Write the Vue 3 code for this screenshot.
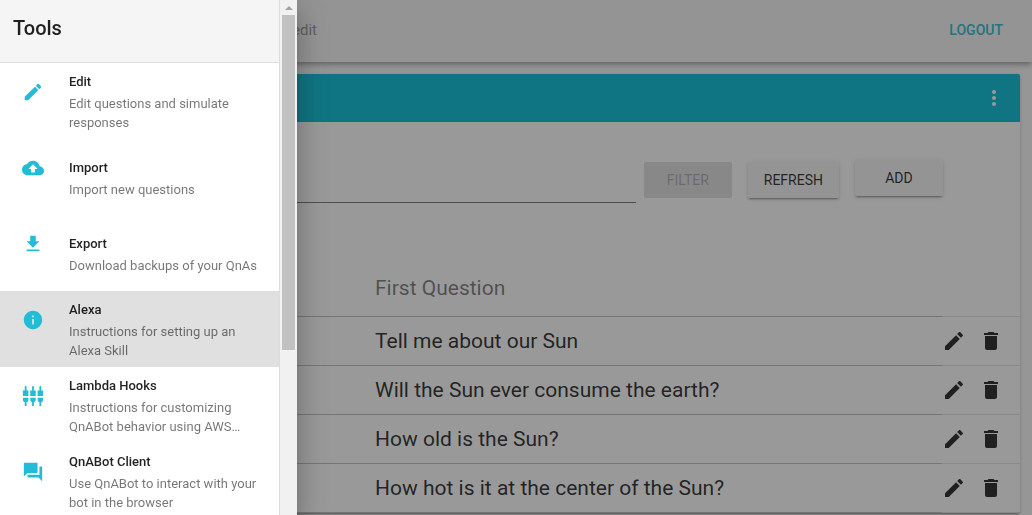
<script setup>
const icons = {
  pencil: 'M3 17.25V21h3.75L17.81 9.94l-3.75-3.75L3 17.25zM20.71 7.04c.39-.39.39-1.02 0-1.41l-2.34-2.34c-.39-.39-1.02-.39-1.41 0l-1.83 1.83 3.75 3.75 1.83-1.83z',
  cloud: 'M19.35 10.04C18.67 6.59 15.64 4 12 4 9.11 4 6.6 5.64 5.35 8.04 2.34 8.36 0 10.91 0 14c0 3.31 2.69 6 6 6h13c2.76 0 5-2.24 5-5 0-2.64-2.05-4.78-4.65-4.96zM14 13v4h-4v-4H7l5-5 5 5h-3z',
  download: 'M19 9h-4V3H9v6H5l7 7 7-7zM5 18v2h14v-2H5z',
  info: 'M12 2C6.48 2 2 6.48 2 12s4.48 10 10 10 10-4.48 10-10S17.52 2 12 2zm1 15h-2v-6h2v6zm0-8h-2V7h2v2z',
  hooks: 'M5 2c0-.55-.45-1-1-1s-1 .45-1 1v4H1v6h6V6H5V2zm4 14c0 1.3.84 2.4 2 2.82V23h2v-4.18c1.16-.41 2-1.51 2-2.82v-2H9v2zm-8 0c0 1.3.84 2.4 2 2.82V23h2v-4.18C6.16 18.4 7 17.3 7 16v-2H1v2zM21 6V2c0-.55-.45-1-1-1s-1 .45-1 1v4h-2v6h6V6h-2zm-8-4c0-.55-.45-1-1-1s-1 .45-1 1v4H9v6h6V6h-2V2zm4 14c0 1.3.84 2.4 2 2.82V23h2v-4.18c1.16-.41 2-1.51 2-2.82v-2h-6v2z',
  chat: 'M21 6h-2v9H6v2c0 .55.45 1 1 1h11l4 4V7c0-.55-.45-1-1-1zm-4 6V3c0-.55-.45-1-1-1H3c-.55 0-1 .45-1 1v14l4-4h10c.55 0 1-.45 1-1z',
  trash: 'M6 19c0 1.1.9 2 2 2h8c1.1 0 2-.9 2-2V7H6v12zM19 4h-3.5l-1-1h-5l-1 1H5v2h14V4z',
  more: 'M12 8c1.1 0 2-.9 2-2s-.9-2-2-2-2 .9-2 2 .9 2 2 2zm0 2c-1.1 0-2 .9-2 2s.9 2 2 2 2-.9 2-2-.9-2-2-2zm0 6c-1.1 0-2 .9-2 2s.9 2 2 2 2-.9 2-2-.9-2-2-2z'
}

const tools = [
  { title: 'Edit', text: 'Edit questions and simulate responses', icon: 'pencil' },
  { title: 'Import', text: 'Import new questions', icon: 'cloud' },
  { title: 'Export', text: 'Download backups of your QnAs', icon: 'download' },
  { title: 'Alexa', text: 'Instructions for setting up an Alexa Skill', icon: 'info', active: true },
  { title: 'Lambda Hooks', text: 'Instructions for customizing QnABot behavior using AWS…', icon: 'hooks' },
  { title: 'QnABot Client', text: 'Use QnABot to interact with your bot in the browser', icon: 'chat' }
]

const questions = [
  'Tell me about our Sun',
  'Will the Sun ever consume the earth?',
  'How old is the Sun?',
  'How hot is it at the center of the Sun?'
]
</script>

<template>
  <div class="app">
    <header class="toolbar">
      <span class="crumb">edit</span>
      <button class="logout" type="button">LOGOUT</button>
    </header>

    <main class="content">
      <section class="card">
        <div class="card-bar">
          <button class="icon-btn" type="button" aria-label="More">
            <svg class="icon" viewBox="0 0 24 24"><path :d="icons.more" /></svg>
          </button>
        </div>
        <form class="filters" @submit.prevent>
          <input class="filter-input" type="text" aria-label="Filter" />
          <button class="btn" type="button" disabled>FILTER</button>
          <button class="btn" type="button">REFRESH</button>
          <button class="btn add" type="button">ADD</button>
        </form>
        <table class="questions">
          <thead>
            <tr>
              <td class="lead"></td>
              <th scope="col">First Question</th>
              <td class="actions"></td>
            </tr>
          </thead>
          <tbody>
            <tr v-for="q in questions" :key="q">
              <td class="lead"></td>
              <td>{{ q }}</td>
              <td class="actions">
                <div class="action-list">
                  <button class="icon-btn" type="button" aria-label="Edit">
                    <svg class="icon" viewBox="0 0 24 24"><path :d="icons.pencil" /></svg>
                  </button>
                  <button class="icon-btn" type="button" aria-label="Delete">
                    <svg class="icon" viewBox="0 0 24 24"><path :d="icons.trash" /></svg>
                  </button>
                </div>
              </td>
            </tr>
          </tbody>
        </table>
      </section>
    </main>

    <div class="scrim"></div>

    <aside class="drawer">
      <div class="drawer-body">
        <h1 class="drawer-title">Tools</h1>
        <nav>
          <a v-for="t in tools" :key="t.title" href="#" class="tool" :class="{ active: t.active }">
            <svg class="icon tool-icon" viewBox="0 0 24 24"><path :d="icons[t.icon]" /></svg>
            <span class="tool-text">
              <span class="tool-title">{{ t.title }}</span>
              <span class="tool-sub">{{ t.text }}</span>
            </span>
          </a>
        </nav>
      </div>
      <div class="scrollbar">
        <svg class="arrow" viewBox="0 0 8 4"><path d="M0 4L4 0l4 4z" /></svg>
        <div class="thumb"></div>
      </div>
    </aside>
  </div>
</template>

<style>
body {
  background: #fafafa;
  overflow: hidden;
}
</style>

<style scoped>
.app {
  min-height: 100vh;
  font-family: Roboto, "Liberation Sans", sans-serif;
  color: rgba(0, 0, 0, 0.87);
}
.app * {
  box-sizing: border-box;
}
button {
  font-family: inherit;
  border: 0;
  padding: 0;
  background: none;
  color: inherit;
}
.icon {
  display: block;
  width: 24px;
  height: 24px;
  fill: currentColor;
}
.icon-btn {
  display: block;
}
.toolbar {
  position: relative;
  display: flex;
  align-items: center;
  justify-content: space-between;
  height: 62px;
  padding: 0 29px 2px 292px;
  background: #f5f5f5;
  box-shadow: 0 2px 4px -1px rgba(0, 0, 0, 0.2), 0 4px 5px rgba(0, 0, 0, 0.14), 0 1px 10px rgba(0, 0, 0, 0.12);
}
.crumb {
  font-size: 15px;
  color: rgba(0, 0, 0, 0.42);
}
.logout {
  font-size: 14px;
  font-weight: 500;
  color: #22bcd4;
}
.content {
  padding: 12px;
}
.card {
  background: #fff;
  border-radius: 2px;
  box-shadow: 0 3px 1px -2px rgba(0, 0, 0, 0.2), 0 2px 2px rgba(0, 0, 0, 0.14), 0 1px 5px rgba(0, 0, 0, 0.12);
}
.card-bar {
  display: flex;
  align-items: center;
  justify-content: flex-end;
  height: 48px;
  padding-right: 14px;
  border-radius: 2px 2px 0 0;
  background: #00bcd4;
  color: #fff;
}
.filters {
  display: flex;
  align-items: flex-start;
  height: 138px;
  padding: 40px 77px 0 24px;
}
.filter-input {
  flex: 1;
  min-width: 0;
  height: 41px;
  margin-right: 8px;
  border: 0;
  border-bottom: 1px solid rgba(0, 0, 0, 0.54);
  background: none;
  font: 16px Roboto, sans-serif;
}
.btn {
  min-width: 88px;
  height: 36px;
  padding: 0 16px;
  margin-right: 16px;
  border-radius: 2px;
  background: #f5f5f5;
  font-size: 14px;
  box-shadow: 0 3px 1px -2px rgba(0, 0, 0, 0.2), 0 2px 2px rgba(0, 0, 0, 0.14), 0 1px 5px rgba(0, 0, 0, 0.12);
}
.btn:disabled {
  background: rgba(0, 0, 0, 0.12);
  color: rgba(0, 0, 0, 0.26);
  box-shadow: none;
}
.btn.add {
  margin: -2px 0 0;
}
.questions {
  width: 100%;
  border-collapse: collapse;
  table-layout: fixed;
  font-size: 21px;
}
.questions th,
.questions td {
  height: 49px;
  padding: 0;
  text-align: left;
  font-weight: 400;
  border-bottom: 1px solid rgba(0, 0, 0, 0.25);
}
.questions thead th,
.questions thead td {
  height: 56px;
}
.questions th {
  color: rgba(0, 0, 0, 0.54);
}
.questions .lead {
  width: 363px;
}
.questions .actions {
  width: 78px;
  border-bottom-color: rgba(0, 0, 0, 0.12);
}
.action-list {
  display: flex;
  gap: 13px;
}
.scrim {
  position: fixed;
  inset: 0;
  background: rgba(33, 33, 33, 0.46);
}
.drawer {
  position: fixed;
  top: 0;
  bottom: 0;
  left: 0;
  display: flex;
  width: 297px;
  background: #fff;
  box-shadow: 0 8px 10px -5px rgba(0, 0, 0, 0.2), 0 16px 24px 2px rgba(0, 0, 0, 0.14), 0 6px 30px 5px rgba(0, 0, 0, 0.12);
}
.drawer-body {
  flex: 1;
  overflow: hidden;
  border-right: 1px solid #dcdcdc;
}
.drawer-title {
  display: flex;
  align-items: center;
  height: 63px;
  margin: 0;
  padding: 0 13px 6px;
  font-size: 20px;
  font-weight: 500;
  background: #f5f5f5;
  border-bottom: 1px solid #dfdfdf;
}
.tool {
  display: flex;
  align-items: center;
  height: 76px;
  padding: 0 12px 0 22px;
  color: inherit;
  text-decoration: none;
}
.tool.active {
  background: #e0e0e0;
}
.tool-icon {
  flex: none;
  align-self: flex-start;
  width: 22px;
  height: 22px;
  margin: 18px 25px 0 0;
  color: #22bcd6;
}
.tool-title,
.tool-sub {
  display: block;
  font-size: 13px;
}
.tool-title {
  line-height: 24px;
  font-weight: 500;
}
.tool-sub {
  line-height: 19px;
  color: rgba(0, 0, 0, 0.54);
}
.scrollbar {
  width: 17px;
  padding: 6px 2px 0;
  background: #f1f1f1;
}
.arrow {
  display: block;
  width: 8px;
  height: 4px;
  margin: 0 auto 5px;
  fill: #a3a3a3;
}
.thumb {
  height: 65vh;
  background: #c1c1c1;
}
</style>
